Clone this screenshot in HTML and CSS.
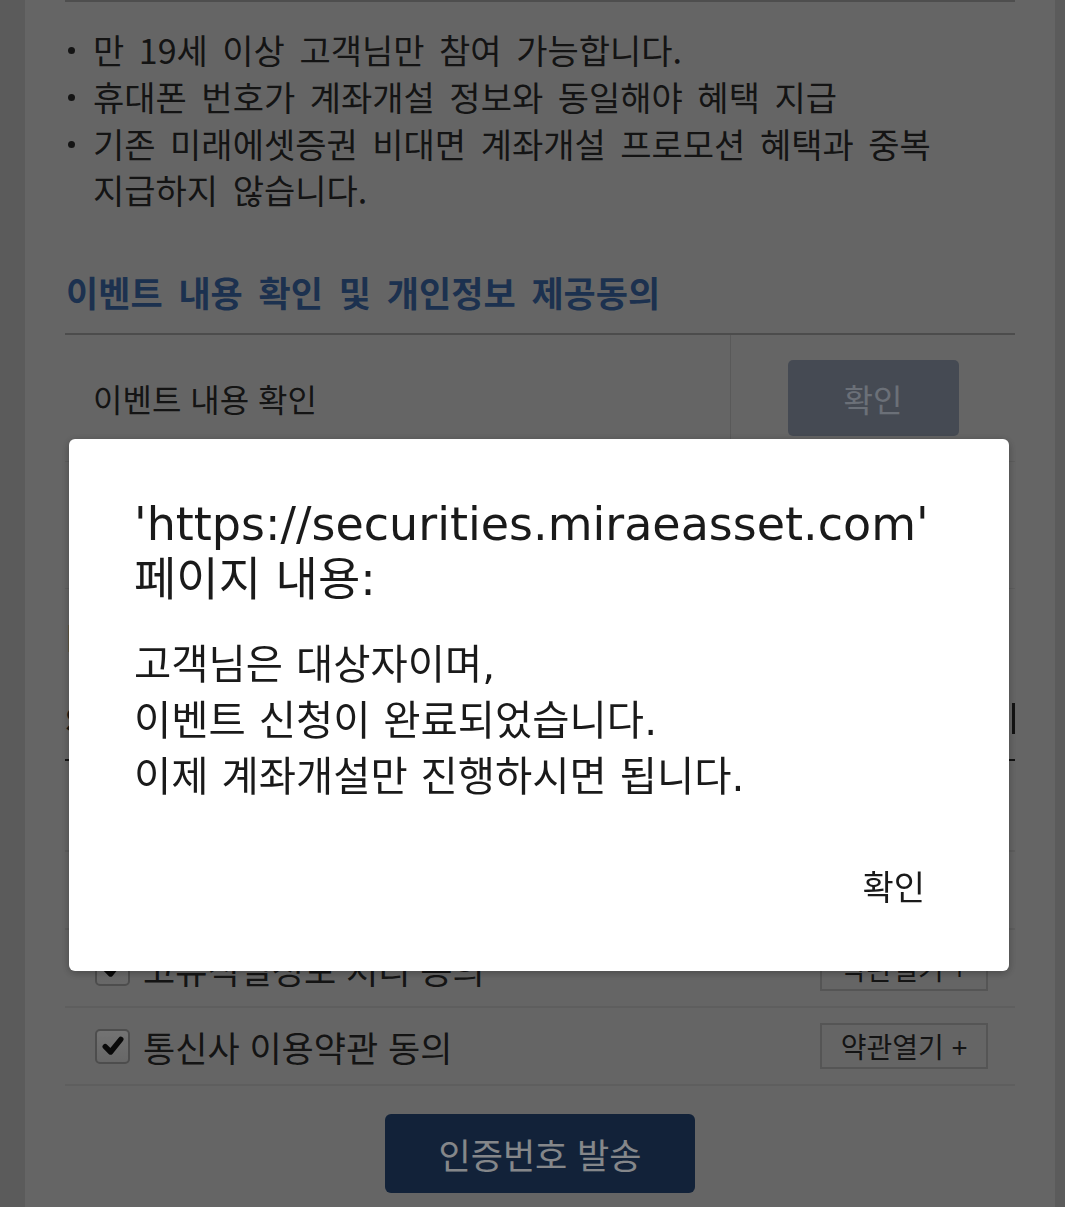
FILE: index.html
```html
<!DOCTYPE html>
<html lang="ko">
<head>
    <meta charset="UTF-8">
    <title>이벤트 신청</title>
    <link rel="stylesheet" href="styles.css">
</head>

<body>
    <div class="page">
        <!-- 유의사항 -->
        <div class="notice">
            <ul class="bullets">
                <li>만 19세 이상 고객님만 참여 가능합니다.</li>
                <li>휴대폰 번호가 계좌개설 정보와 동일해야 혜택 지급</li>
                <li>기존 미래에셋증권 비대면 계좌개설 프로모션 혜택과 중복 지급하지 않습니다.</li>
            </ul>
        </div>

        <h2 class="sec-title">이벤트 내용 확인 및 개인정보 제공동의</h2>

        <div class="confirm-list">
            <div class="confirm-row">
                <div class="cell">이벤트 내용 확인</div>
                <div class="cell cell-btn"><button class="btn-check">확인</button></div>
            </div>
            <div class="confirm-row">
                <div class="cell">개인정보 수집·이용 동의</div>
                <div class="cell cell-btn"><button class="btn-check">확인</button></div>
            </div>
        </div>

        <p class="note">[필수] 이벤트 내용 확인 후 본인인증을 진행해 주세요.</p>

        <div class="auth-head">
            <h3>SMS 본인인증</h3>
            <span class="auth-tag">필수</span>
        </div>

        <ul class="agree-list">
            <li class="agree-row all">
                <span class="chk"><svg viewBox="0 0 20 20"><path d="M3.5 10.5 L8 15 L16.5 4.5" /></svg></span>
                <span class="agree-txt">전체 동의</span>
            </li>
            <li class="agree-row">
                <span class="chk"><svg viewBox="0 0 20 20"><path d="M3.5 10.5 L8 15 L16.5 4.5" /></svg></span>
                <span class="agree-txt">개인정보 수집 및 이용 동의</span>
                <button class="btn-terms">약관열기 +</button>
            </li>
            <li class="agree-row">
                <span class="chk"><svg viewBox="0 0 20 20"><path d="M3.5 10.5 L8 15 L16.5 4.5" /></svg></span>
                <span class="agree-txt">고유식별정보 처리 동의</span>
                <button class="btn-terms">약관열기 +</button>
            </li>
            <li class="agree-row">
                <span class="chk"><svg viewBox="0 0 20 20"><path d="M3.5 10.5 L8 15 L16.5 4.5" /></svg></span>
                <span class="agree-txt">통신사 이용약관 동의</span>
                <button class="btn-terms">약관열기 +</button>
            </li>
        </ul>

        <div class="send-wrap">
            <button class="btn-send">인증번호 발송</button>
        </div>
    </div>

    <!-- alert 창 -->
    <div class="dim"></div>
    <div class="alert">
        <p class="alert-title">'https://securities.miraeasset.com' 페이지 내용:</p>
        <p class="alert-msg">고객님은 대상자이며,<br>이벤트 신청이 완료되었습니다.<br>이제 계좌개설만 진행하시면 됩니다.</p>
        <div class="alert-actions">
            <button class="alert-ok">확인</button>
        </div>
    </div>
</body>
</html>
```

FILE: styles.css
```css
* {
    box-sizing: border-box;
}
html,
body {
    margin: 0;
    height: 100%;
    overflow: hidden;
}
body {
    background-color: #a6a6a6;
    font-family: "Noto Sans CJK KR", sans-serif;
    color: #262626;
}
button {
    font-family: inherit;
    cursor: pointer;
}

.page {
    margin: 0 10px 0 25px;
    padding: 0 40px;
    min-height: 1207px;
    background-color: #b9b9b9;
}

/* 유의사항 */
.notice {
    border-top: 2px solid #8f8f8f;
    padding-top: 25px;
}
.bullets {
    list-style: none;
    margin: 0;
    padding: 0 0 0 28px;
    font-size: 34px;
    line-height: 46px;
    word-spacing: 5px;
    word-break: keep-all;
}
.bullets li {
    position: relative;
    margin-bottom: 1px;
}
.bullets li::before {
    content: "";
    position: absolute;
    left: -25px;
    top: 20px;
    width: 7px;
    height: 7px;
    border-radius: 50%;
    background-color: #262626;
}

.sec-title {
    margin: 56px 0 18px 1px;
    font-size: 35px;
    line-height: 46px;
    font-weight: 700;
    word-spacing: 6px;
    color: #345a90;
}

/* 확인 테이블 */
.confirm-list {
    border-top: 2px solid #8a8a8a;
}
.confirm-row {
    display: grid;
    grid-template-columns: 665px 1fr;
    height: 127px;
    border-bottom: 1px solid #acacac;
}
.cell {
    display: flex;
    align-items: center;
    padding-left: 28px;
    font-size: 32px;
}
.cell-btn {
    justify-content: center;
    padding: 0;
    border-left: 1px solid #a3a3a3;
}
.btn-check {
    width: 171px;
    height: 76px;
    border: 0;
    border-radius: 5px;
    background-color: #7f8898;
    color: #c4ccda;
    font-size: 32px;
}

.note {
    margin: 30px 0 0 1px;
    font-size: 28px;
    line-height: 36px;
}

.auth-head {
    display: flex;
    justify-content: space-between;
    align-items: center;
    margin-top: 40px;
    padding-bottom: 18px;
    border-bottom: 2px solid #222;
}
.auth-head h3 {
    margin: 0;
    font-size: 32px;
    line-height: 46px;
    color: #262626;
}
.auth-tag {
    height: 31px;
    padding-right: 4px;
    border-right: 3px solid #222;
    font-size: 22px;
    line-height: 31px;
}

/* 약관 동의 */
.agree-list {
    list-style: none;
    margin: 0;
    padding: 0;
}
.agree-row {
    display: flex;
    align-items: center;
    height: 78px;
    padding: 0 27px 0 30px;
    border-bottom: 2px solid #acacac;
    font-size: 35px;
}
.agree-row.all {
    height: 91px;
}
.chk {
    display: flex;
    align-items: center;
    justify-content: center;
    flex: none;
    width: 35px;
    height: 35px;
    margin-right: 13px;
    border: 2px solid #8c8c8c;
    border-radius: 5px;
    background: linear-gradient(#d2d2d2, #bcbcbc);
}
.chk svg {
    width: 24px;
    height: 24px;
    fill: none;
    stroke: #111;
    stroke-width: 4.5;
    stroke-linecap: round;
    stroke-linejoin: round;
}
.agree-txt {
    flex: 1;
}
.btn-terms {
    width: 168px;
    height: 46px;
    border: 2px solid #9c9c9c;
    background-color: transparent;
    color: #262626;
    font-size: 28px;
}

.send-wrap {
    display: flex;
    justify-content: center;
    padding-top: 28px;
}
.btn-send {
    width: 310px;
    height: 79px;
    border: 0;
    border-radius: 6px;
    background-color: #213f68;
    color: #f2f6fb;
    font-size: 35px;
}

/* 딤 + alert */
.dim {
    position: fixed;
    inset: 0;
    background-color: rgba(0, 0, 0, 0.45);
}
.alert {
    position: fixed;
    top: 439px;
    left: 69px;
    width: 940px;
    padding: 58px 66px 59px 65px;
    border-radius: 6px;
    background-color: #fff;
    box-shadow: 0 2px 10px rgba(0, 0, 0, 0.3);
    font-family: "DejaVu Sans", "Noto Sans CJK KR", sans-serif;
    color: #1a1a1a;
}
.alert p {
    margin: 0;
}
.alert-title {
    font-size: 46px;
    line-height: 55px;
}
.alert-msg {
    margin-top: 30px !important;
    font-size: 40.5px;
    line-height: 56px;
}
.alert-actions {
    display: flex;
    justify-content: flex-end;
    margin-top: 59px;
}
.alert-ok {
    height: 48px;
    padding: 0 18px;
    border: 0;
    background: none;
    color: #1a1a1a;
    font-size: 34px;
    line-height: 48px;
}
```
